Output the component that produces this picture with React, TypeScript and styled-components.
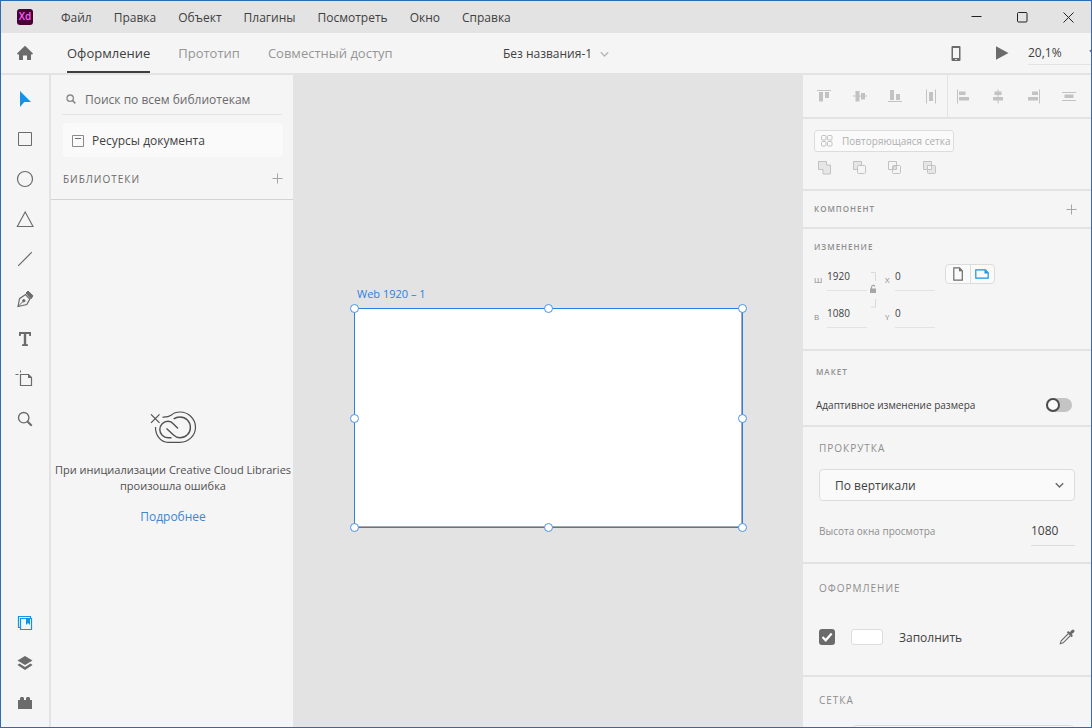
import React from "react";
import styled, { createGlobalStyle } from "styled-components";

const ink = "#3f3f3f";
const mid = "#6b6b6b";
const pale = "#c2c2c2";
const line = "#e3e3e3";
const surface = "#f5f5f5";
const accent = "#1592e6";

const GlobalStyle = createGlobalStyle`
  *, *::before, *::after { box-sizing: border-box; }
  body {
    margin: 0;
    font-family: "Open Sans", "Noto Sans", sans-serif;
    font-size: 12px;
    line-height: 16px;
    color: ${ink};
  }
  button, input, select { font: inherit; color: inherit; margin: 0; }
  button { border: 0; padding: 0; background: none; }
  svg { display: block; flex: none; }
`;

const Window = styled.div`
  display: flex;
  flex-direction: column;
  height: 100vh;
  overflow: hidden;
  border: 1px solid #2d6cb0;
  background: ${line};
`;

const TitleBar = styled.header`
  display: flex;
  align-items: center;
  height: 32px;
  flex: none;
  padding-left: 16px;
`;

const Menu = styled.nav`
  display: flex;
  flex: 1;
  gap: 22px;
  margin-left: 28px;
`;

const MenuItem = styled.button`
  height: 32px;
  padding-top: 2px;
  white-space: nowrap;
`;

const WindowButton = styled.button`
  display: grid;
  place-items: center;
  width: 46px;
  height: 32px;
`;

const Toolbar = styled.div`
  display: flex;
  align-items: stretch;
  height: 40px;
  flex: none;
  background: ${surface};
`;

const ToolbarStart = styled.div`
  display: flex;
  flex: 1;
`;

const ToolbarEnd = styled.div`
  display: flex;
  flex: 1;
  align-items: center;
  justify-content: flex-end;
`;

const HomeButton = styled.button`
  display: grid;
  place-items: center;
  width: 48px;
`;

const Tabs = styled.div`
  display: flex;
  gap: 28px;
  margin-left: 18px;
`;

const Tab = styled.button<{ $active?: boolean }>`
  font-size: 13px;
  white-space: nowrap;
  padding-top: 2px;
  color: ${(p) => (p.$active ? ink : "#969696")};
  border-bottom: 2px solid ${(p) => (p.$active ? ink : "transparent")};
`;

const DocumentName = styled.button`
  display: flex;
  align-items: center;
  gap: 8px;
  padding: 2px 0 0 20px;
  white-space: nowrap;
`;

const PreviewButton = styled.button`
  display: grid;
  place-items: center;
  width: 46px;
  height: 40px;
`;

const Zoom = styled.label`
  display: flex;
  align-items: center;
  width: 63px;
  height: 24px;
  overflow: hidden;
  margin-left: 3px;
  border-bottom: 1px solid ${line};
`;

const ZoomInput = styled.input`
  width: 61px;
  flex: none;
  border: 0;
  padding: 0;
  background: none;
  outline: none;
`;

const Workspace = styled.div`
  display: flex;
  flex: 1;
  min-height: 0;
  padding-top: 2px;
`;

const ToolRail = styled.nav`
  display: flex;
  flex-direction: column;
  justify-content: space-between;
  width: 50px;
  flex: none;
  padding: 4px 0;
  background: ${surface};
  border-right: 2px solid ${line};
`;

const ToolButton = styled.button`
  display: grid;
  place-items: center;
  width: 48px;
  height: 40px;
`;

const Libraries = styled.aside`
  display: flex;
  flex-direction: column;
  width: 242px;
  flex: none;
  background: ${surface};
`;

const Search = styled.label`
  display: flex;
  align-items: center;
  gap: 9px;
  height: 40px;
  flex: none;
  margin: 0 11px;
  padding: 9px 0 0 4px;
  border-bottom: 1px solid ${line};
`;

const SearchInput = styled.input`
  flex: 1;
  min-width: 0;
  height: 30px;
  border: 0;
  padding: 0;
  background: none;
  outline: none;
  &::placeholder { color: ${mid}; opacity: 1; }
`;

const AssetsButton = styled.button`
  display: flex;
  align-items: center;
  gap: 8px;
  height: 34px;
  flex: none;
  margin: 8px 10px 0 12px;
  padding: 2px 0 0 9px;
  border-radius: 4px;
  background: #fafafa;
`;

const LibrariesHeader = styled.div`
  display: flex;
  align-items: center;
  justify-content: space-between;
  height: 43px;
  flex: none;
  padding: 1px 10px 0 12px;
  border-bottom: 1px solid #d3d3d3;
`;

const Caption = styled.h2<{ $size?: number; $dark?: boolean; $strong?: boolean }>`
  margin: 0;
  font-size: ${(p) => p.$size ?? 10}px;
  font-weight: ${(p) => (p.$strong ? 600 : 400)};
  line-height: 16px;
  letter-spacing: 1px;
  text-transform: uppercase;
  color: ${(p) => (p.$dark ? mid : "#8e8e8e")};
`;

const ErrorState = styled.div`
  display: flex;
  flex: 1;
  flex-direction: column;
  align-items: center;
  justify-content: center;
  padding: 8px 0 0 2px;
  text-align: center;
  color: #505050;
`;

const ErrorText = styled.p`
  margin: 18px 0 15px;
  font-size: 11px;
  white-space: nowrap;
`;

const MoreLink = styled.a`
  color: #3a87d4;
  text-decoration: none;
`;

const Canvas = styled.main`
  display: flex;
  flex: 1;
  flex-direction: column;
  align-items: center;
  justify-content: center;
  padding-top: 11px;
  min-width: 0;
`;

const ArtboardFrame = styled.section`
  width: 388px;
`;

const ArtboardName = styled.div`
  height: 22px;
  padding-left: 3px;
  font-size: 11px;
  color: #2a80e4;
`;

const Artboard = styled.div`
  position: relative;
  height: 219px;
  background: #fff;
  border: solid #a8a8a8;
  border-width: 0 1px 1px 0;
`;

const Selection = styled.div`
  position: absolute;
  inset: 0 -1px -1px 0;
  &::before {
    content: "";
    position: absolute;
    inset: 0 -1px -1px 0;
    border: 1px solid #2a80e4;
  }
`;

const Handle = styled.i<{ $x: number; $y: number }>`
  position: absolute;
  left: calc(${(p) => p.$x}% - 4px);
  top: calc(${(p) => p.$y}% - 4px);
  width: 9px;
  height: 9px;
  border: 1px solid #4a93e8;
  border-radius: 50%;
  background: #fff;
`;

const Inspector = styled.aside`
  display: flex;
  flex-direction: column;
  width: 288px;
  flex: none;
  overflow: hidden;
  background: ${surface};
`;

const Section = styled.section<{ $height: number; $inset?: number; $top?: number }>`
  height: ${(p) => p.$height}px;
  flex: none;
  padding: ${(p) => p.$top ?? 0}px 16px 0 ${(p) => p.$inset ?? 16}px;
  border-bottom: 2px solid ${line};
`;

const AlignSection = styled(Section)`
  display: flex;
  padding: 0;
`;

const AlignGroup = styled.div<{ $first?: boolean }>`
  display: flex;
  align-items: center;
  justify-content: space-between;
  flex: 1;
  padding: ${(p) => (p.$first ? "0 8px 0 13px" : "0 14px 0 7px")};
  border-right: ${(p) => (p.$first ? `1px solid ${line}` : "0")};
`;

const IconButton = styled.button`
  display: grid;
  place-items: center;
  color: ${pale};
`;

const RepeatGrid = styled.button`
  display: flex;
  align-items: center;
  gap: 9px;
  width: 140px;
  height: 22px;
  padding-left: 6px;
  border: 1px solid #dcdcdc;
  border-radius: 3px;
  background: #fafafa;
  font-size: 10px;
  white-space: nowrap;
  color: #b0b0b0;
`;

const BooleanOps = styled.div`
  display: flex;
  gap: 20px;
  margin: 8px 0 0 3px;
`;

const TitleRow = styled.div`
  display: flex;
  align-items: center;
  justify-content: space-between;
  height: 36px;
  margin-right: -2px;
`;

const TransformGrid = styled.div`
  display: flex;
  margin-top: 9px;
`;

const FieldColumn = styled.div`
  display: flex;
  flex-direction: column;
  gap: 10px;
`;

const Field = styled.label<{ $label: number }>`
  display: grid;
  grid-template-columns: ${(p) => p.$label}px 40px;
  font-size: 8px;
  color: #8a8a8a;
`;

const FieldName = styled.span`
  padding-top: 8px;
`;

const FieldInput = styled.input`
  width: 100%;
  height: 27px;
  padding: 0 0 3px;
  border: 0;
  border-bottom: 1px solid ${line};
  background: none;
  outline: none;
  font-size: 10px;
  color: ${ink};
`;

const LockButton = styled.button`
  display: flex;
  justify-content: center;
  width: 18px;
  padding: 8px 6px 0 0;
  align-items: flex-start;
`;

const Orientation = styled.div`
  display: flex;
  width: 50px;
  height: 20px;
  margin-left: 10px;
  border: 1px solid #dcdcdc;
  border-radius: 4px;
  background: #fafafa;
`;

const OrientationButton = styled.button`
  display: grid;
  place-items: center;
  flex: 1;
  & + & { border-left: 1px solid #dcdcdc; }
`;

const SwitchRow = styled.label`
  display: flex;
  align-items: center;
  justify-content: space-between;
  margin-top: 17px;
  padding-right: 3px;
  font-size: 10px;
`;

const Switch = styled.input`
  appearance: none;
  position: relative;
  width: 26px;
  height: 14px;
  border-radius: 7px;
  background: #c4c4c4;
  &::before {
    content: "";
    position: absolute;
    inset: 0 12px 0 0;
    border: 2px solid #4b4b4b;
    border-radius: 50%;
    background: #fafafa;
  }
`;

const SelectBox = styled.div`
  display: grid;
  align-items: center;
  margin-top: 13px;
  & > * { grid-area: 1 / 1; }
  & > svg { justify-self: end; margin-right: 11px; pointer-events: none; }
`;

const Select = styled.select`
  appearance: none;
  width: 100%;
  height: 32px;
  padding: 2px 15px 0;
  border: 1px solid #dcdcdc;
  border-radius: 4px;
  background: #fafafa;
`;

const ViewportRow = styled.label`
  display: flex;
  align-items: center;
  justify-content: space-between;
  margin-top: 14px;
  font-size: 10px;
  color: #8e8e8e;
`;

const ViewportInput = styled.input`
  width: 44px;
  height: 31px;
  padding: 0;
  border: 0;
  border-bottom: 1px solid #dcdcdc;
  background: none;
  outline: none;
  font-size: 12px;
  color: ${ink};
`;

const FillRow = styled.div`
  display: flex;
  align-items: center;
  gap: 16px;
  height: 24px;
  margin-top: 29px;
`;

const CheckLabel = styled.label`
  display: grid;
  place-items: center;
  & > * { grid-area: 1 / 1; }
  & > svg { z-index: 1; pointer-events: none; }
`;

const Checkbox = styled.input`
  appearance: none;
  width: 16px;
  height: 16px;
  border-radius: 3px;
  background: ${mid};
`;

const Swatch = styled.button`
  width: 32px;
  height: 16px;
  border: 1px solid #dcdcdc;
  border-radius: 3px;
  background: #fff;
`;

const FillName = styled.span`
  flex: 1;
  padding-top: 2px;
`;

const GridBox = styled.select`
  display: block;
  appearance: none;
  width: 222px;
  height: 32px;
  margin: 17px 0 0 33px;
  border: 1px solid #dcdcdc;
  border-radius: 4px;
  background: #fafafa;
`;

type IconProps = { w: number; h: number; box?: string; children: React.ReactNode; fill?: string; stroke?: string };
const Icon = ({ w, h, box, children, fill = "none", stroke = "none" }: IconProps) => (
  <svg width={w} height={h} viewBox={box ?? `0 0 ${w} ${h}`} fill={fill} stroke={stroke} aria-hidden="true">
    {children}
  </svg>
);

const Plus = () => (
  <Icon w={11} h={11} stroke="#a6a6a6"><path d="M5.5 .5v10M.5 5.5h10" /></Icon>
);

const Chevron = ({ color, width = 1.5 }: { color: string; width?: number }) => (
  <Icon w={9} h={7} stroke={color}><path d="M.8 1.3 4.5 5 8.2 1.3" strokeWidth={width} /></Icon>
);

const menuItems = ["Файл", "Правка", "Объект", "Плагины", "Посмотреть", "Окно", "Справка"];
const tabs = ["Оформление", "Прототип", "Совместный доступ"];

const tools = [
  { name: "Выделение", icon: <Icon w={16} h={18} fill={accent}><path d="M3 1v16l4.300-5H14z" /></Icon> },
  { name: "Прямоугольник", icon: <Icon w={16} h={16} stroke={mid}><path d="M1.500 1.500h13v13h-13z" /></Icon> },
  { name: "Эллипс", icon: <Icon w={18} h={18} stroke={mid}><circle cx="9" cy="9" r="7.500" strokeWidth="1.200" /></Icon> },
  { name: "Многоугольник", icon: <Icon w={18} h={18} stroke={mid}><path d="M9.200 2 17 16.500H1.300z" strokeWidth="1.100" /></Icon> },
  { name: "Линия", icon: <Icon w={16} h={16} stroke={mid}><path d="m1.200 14.800 13.600-13.600" strokeWidth="1.200" /></Icon> },
  {
    name: "Перо",
    icon: (
      <Icon w={18} h={18} stroke={mid}>
        <path d="M2 16.500 3.500 8.700 9.500 4.600 13.800 9 10.800 14.500z" strokeWidth="1.200" />
        <path d="m2 16.500 5-5" />
        <circle cx="7.800" cy="10.800" r="1.200" fill={mid} />
        <path d="m10 3 2-2 5 4.800-2 3z" fill={mid} />
      </Icon>
    ),
  },
  {
    name: "Текст",
    icon: <Icon w={14} h={16} fill={mid}><path d="M1 1h12v4h-1.700L11 3H8.200v10l1.800.4V15H4v-1.600l1.800-.4V3H3L2.700 5H1z" /></Icon>,
  },
  {
    name: "Монтажная область",
    icon: (
      <Icon w={20} h={18} stroke={mid}>
        <path d="M5.500 4.500h8l3 3v8h-11z" strokeWidth="1.200" />
        <path d="M13 4v4h4z" fill={mid} stroke="none" />
        <path d="M.5 4.500h3M5.500 .5v2" />
      </Icon>
    ),
  },
  {
    name: "Масштаб",
    icon: <Icon w={16} h={16} stroke={mid}><circle cx="6.700" cy="6.700" r="5.200" strokeWidth="1.400" /><path d="m10.500 10.500 4.200 4.200" strokeWidth="2" /></Icon>,
  },
];

const panels = [
  {
    name: "Библиотеки",
    icon: (
      <Icon w={16} h={16} stroke={accent}>
        <path d="M3 12.500H1.500v-11h12V3" strokeWidth="1.200" />
        <path d="M3.500 3.500h11v11h-11z" strokeWidth="1.200" />
        <path d="M9 3.500h4V10l-2-2-2 2z" fill={accent} stroke="none" />
      </Icon>
    ),
  },
  {
    name: "Слои",
    icon: <Icon w={16} h={16} fill={mid}><path d="m8 1 7.500 4.500L8 10 .5 5.500z" /><path d="m2.400 8.600 5.600 3.300 5.600-3.300 1.900 1.400L8 15 .5 10z" /></Icon>,
  },
  {
    name: "Плагины",
    icon: <Icon w={16} h={14} fill={mid}><path d="M1 4h2V2l1-1h2l1 1v2h2V2l1-1h2l1 1v2h2v9H1z" /></Icon>,
  },
];

const columnAlign = [
  { name: "По верхнему краю", icon: <path d="M1 2.500h14" stroke="currentColor" />, bars: "M3 4h4v9.500H3zM9 4h4v6H9z" },
  { name: "По центру вертикально", icon: <path d="M1 8h14" stroke="currentColor" />, bars: "M3.500 3h4v10.500h-4zM9 5h4v6.500H9z" },
  { name: "По нижнему краю", icon: <path d="M1 13.500h14" stroke="currentColor" />, bars: "M3 2h4v10H3zM9 6h4v6H9z" },
  { name: "Распределить по горизонтали", icon: <path d="M3.500 1.500v14M12.500 1.500v14" stroke="currentColor" />, bars: "M6 4h4v9H6z" },
];
const rowAlign = [
  { name: "По левому краю", icon: <path d="M2.500 1.500v14" stroke="currentColor" />, bars: "M4 3.500h6.500V7H4zM4 9h10v3.500H4z" },
  { name: "По центру горизонтально", icon: <path d="M8 1.500v14" stroke="currentColor" />, bars: "M4.500 3.500h7V7h-7zM3 9h10v3.500H3z" },
  { name: "По правому краю", icon: <path d="M13.500 1.500v14" stroke="currentColor" />, bars: "M6 3.500h6V7H6zM2 9h10v3.500H2z" },
  { name: "Распределить по вертикали", icon: <path d="M1 4.500h14M1 12.500h14" stroke="currentColor" />, bars: "M3.500 6.500h9v3.500h-9z" },
];

const booleans = [
  { name: "Добавить", icon: <path d="M1.500 1.500h8v3.500h4v9H6V9.500H1.500z" fill="#e6e6e6" /> },
  { name: "Вычесть", icon: <><path d="M1.500 1.500h8v8h-8z" fill="#e6e6e6" /><rect x="5.500" y="5.500" width="8" height="8" rx="1" fill={surface} /></> },
  { name: "Пересечение", icon: <><path d="M1.500 1.500h8v8h-8z" /><rect x="5.500" y="5.500" width="8" height="8" rx="1" /><path d="M6 6h3.500v3.500H6z" fill="#dedede" /></> },
  { name: "Исключить", icon: <><path d="M1.500 1.500h8v8h-8z" fill="#e6e6e6" /><rect x="5.500" y="5.500" width="8" height="8" rx="1" fill="#e6e6e6" /><path d="M5.500 5.500h4v4h-4z" fill={surface} /></> },
];

const handles = [[0, 0], [50, 0], [100, 0], [0, 50], [100, 50], [0, 100], [50, 100], [100, 100]];

const AlignButton = ({ name, icon, bars }: { name: string; icon: React.ReactNode; bars: string }) => (
  <IconButton aria-label={name}>
    <Icon w={16} h={17}>{icon}<path d={bars} fill="currentColor" /></Icon>
  </IconButton>
);

const NumberField = ({ name, value, label }: { name: string; value: string; label: number }) => (
  <Field $label={label}>
    <FieldName>{name}</FieldName>
    <FieldInput defaultValue={value} />
  </Field>
);

export default function App() {
  return (
    <>
      <GlobalStyle />
      <Window>
        <TitleBar>
          <svg width="16" height="16" viewBox="0 0 16 16" role="img" aria-label="Xd">
            <rect width="16" height="16" rx="3" fill="#470137" />
            <text x="8" y="11" textAnchor="middle" fontSize="10" fontWeight="600" fill="#ff61f6">Xd</text>
          </svg>
          <Menu>
            {menuItems.map((item) => <MenuItem key={item}>{item}</MenuItem>)}
          </Menu>
          <WindowButton aria-label="Свернуть">
            <Icon w={11} h={11} stroke="#222"><path d="M.5 4.500h10" /></Icon>
          </WindowButton>
          <WindowButton aria-label="Развернуть">
            <Icon w={11} h={11} stroke="#222"><rect x=".5" y=".5" width="9.500" height="9.500" rx="1" /></Icon>
          </WindowButton>
          <WindowButton aria-label="Закрыть">
            <Icon w={11} h={11} stroke="#222"><path d="m.5.5 10 10M10.500.5l-10 10" /></Icon>
          </WindowButton>
        </TitleBar>

        <Toolbar>
          <ToolbarStart>
            <HomeButton aria-label="Главная">
              <Icon w={16} h={16} fill={mid}><path d="M8 .8 16 8.600 15.200 9.400H14V15h-4v-4.500H6V15H2V9.400H.8L0 8.600z" /></Icon>
            </HomeButton>
            <Tabs role="tablist">
              {tabs.map((tab, i) => (
                <Tab key={tab} role="tab" aria-selected={i === 0} $active={i === 0}>{tab}</Tab>
              ))}
            </Tabs>
          </ToolbarStart>
          <DocumentName>Без названия-1 <Chevron color="#b5b5b5" width={1.300} /></DocumentName>
          <ToolbarEnd>
            <PreviewButton aria-label="Просмотр на устройстве">
              <Icon w={10} h={16}>
                <path d="M1.500 1h7a1 1 0 0 1 1 1v13a1 1 0 0 1-1 1h-7a1 1 0 0 1-1-1V2a1 1 0 0 1 1-1zM2 3v10h6V3zM4.200 14v1h1.600v-1z" fill={mid} fillRule="evenodd" />
              </Icon>
            </PreviewButton>
            <PreviewButton aria-label="Просмотр">
              <Icon w={14} h={14} fill={mid}><path d="M1 .3 13.500 7 1 13.700z" /></Icon>
            </PreviewButton>
            <Zoom>
              <ZoomInput aria-label="Масштаб" defaultValue="20,1%" />
              <Chevron color={mid} />
            </Zoom>
          </ToolbarEnd>
        </Toolbar>

        <Workspace>
          <ToolRail aria-label="Инструменты">
            <div>
              {tools.map((t) => <ToolButton key={t.name} aria-label={t.name}>{t.icon}</ToolButton>)}
            </div>
            <div>
              {panels.map((t) => <ToolButton key={t.name} aria-label={t.name}>{t.icon}</ToolButton>)}
            </div>
          </ToolRail>

          <Libraries>
            <Search>
              <Icon w={10} h={10} stroke="#8a8a8a"><circle cx="4.200" cy="4.200" r="3.200" strokeWidth="1.300" /><path d="m6.500 6.500 2.800 2.800" strokeWidth="1.700" /></Icon>
              <SearchInput placeholder="Поиск по всем библиотекам" aria-label="Поиск по всем библиотекам" />
            </Search>
            <AssetsButton>
              <Icon w={12} h={12} stroke={mid}><path d="M.5.500h11v11H.5z" stroke="#8a8a8a" /><path d="M3 3.500h6" /></Icon>
              Ресурсы документа
            </AssetsButton>
            <LibrariesHeader>
              <Caption $dark>Библиотеки</Caption>
              <IconButton aria-label="Добавить библиотеку"><Plus /></IconButton>
            </LibrariesHeader>
            <ErrorState>
              <Icon w={47} h={34} box="100 20 47 34" stroke="#505050">
                <path d="m101 24.300 8.500 8.500M109.500 24.300 101 32.800" strokeWidth="1.200" />
                <path d="M112.500 27.300C116 27 118.500 27 121 25.200 124 22.600 127 22 130 22c8.500 0 15.500 6.800 15.500 15.200S138.500 52.300 130 52.300h-12C110.500 52.300 105.300 45 105.500 37" strokeWidth="1.200" />
                <path d="M128 38.500 123.500 34c-1.600-1.800-3.500-2.700-5.500-2.700a8.200 8.200 0 0 0 0 16.400h3.500" strokeWidth="1.400" />
                <path d="m116.500 38.500 7 6.600c2 1.900 4 2.700 6.500 2.700A10.400 10.400 0 0 0 130 27c-2.500 0-4.500.6-6.300 1.900" strokeWidth="1.400" />
              </Icon>
              <ErrorText>
                При инициализации Creative Cloud Libraries
                <br />
                произошла ошибка
              </ErrorText>
              <MoreLink href="#more">Подробнее</MoreLink>
            </ErrorState>
          </Libraries>

          <Canvas>
            <ArtboardFrame>
              <ArtboardName>Web 1920 – 1</ArtboardName>
              <Artboard>
                <Selection>
                  {handles.map(([x, y]) => <Handle key={`${x}-${y}`} $x={x} $y={y} />)}
                </Selection>
              </Artboard>
            </ArtboardFrame>
          </Canvas>

          <Inspector>
            <AlignSection $height={44}>
              <AlignGroup $first>{columnAlign.map((a) => <AlignButton key={a.name} {...a} />)}</AlignGroup>
              <AlignGroup>{rowAlign.map((a) => <AlignButton key={a.name} {...a} />)}</AlignGroup>
            </AlignSection>

            <Section $height={72} $inset={11} $top={11}>
              <RepeatGrid>
                <Icon w={12} h={12} stroke={pale}>
                  {[[0.5, 0.5], [6.5, 0.5], [0.5, 6.5], [6.5, 6.5]].map(([x, y]) => (
                    <rect key={`${x}-${y}`} x={x} y={y} width="4.500" height="4.500" rx="1" />
                  ))}
                </Icon>
                Повторяющаяся сетка
              </RepeatGrid>
              <BooleanOps>
                {booleans.map((b) => (
                  <IconButton key={b.name} aria-label={b.name}>
                    <Icon w={15} h={15} stroke="currentColor">{b.icon}</Icon>
                  </IconButton>
                ))}
              </BooleanOps>
            </Section>

            <Section $height={38} $inset={11}>
              <TitleRow>
                <Caption $size={8} $strong>Компонент</Caption>
                <IconButton aria-label="Добавить компонент"><Plus /></IconButton>
              </TitleRow>
            </Section>

            <Section $height={122} $inset={11} $top={10}>
              <Caption $size={8} $strong>Изменение</Caption>
              <TransformGrid>
                <FieldColumn>
                  <NumberField name="Ш" value="1920" label={13} />
                  <NumberField name="В" value="1080" label={13} />
                </FieldColumn>
                <LockButton aria-label="Сохранять пропорции">
                  <Icon w={8} h={36}>
                    <path d="M2 .5h4.500V9M6.500 27v8H2" stroke="#dadada" />
                    <path d="M2.500 17v-2a1.800 1.800 0 0 1 3.400-.6" stroke="#a6a6a6" strokeWidth="1.200" />
                    <path d="M1 16.500h6V21H1z" fill="#a6a6a6" />
                  </Icon>
                </LockButton>
                <FieldColumn>
                  <NumberField name="X" value="0" label={10} />
                  <NumberField name="Y" value="0" label={10} />
                </FieldColumn>
                <Orientation>
                  <OrientationButton aria-label="Книжная">
                    <Icon w={10} h={14} stroke={mid}><path d="M.8.8H6.500l2.800 2.900v9.500H.8z" strokeWidth="1.200" /><path d="M6 .8v3.500h3.500z" fill={mid} stroke="none" /></Icon>
                  </OrientationButton>
                  <OrientationButton aria-label="Альбомная">
                    <Icon w={14} h={10} stroke={accent}><path d="M.8.8h9.700l2.700 2.900v5.500H.8z" strokeWidth="1.200" /><path d="M9.500.8v3.800h4z" fill={accent} stroke="none" /></Icon>
                  </OrientationButton>
                </Orientation>
              </TransformGrid>
            </Section>

            <Section $height={76} $inset={13} $top={13}>
              <Caption $size={8} $strong>Макет</Caption>
              <SwitchRow>
                Адаптивное изменение размера
                <Switch type="checkbox" role="switch" />
              </SwitchRow>
            </Section>

            <Section $height={137} $top={13}>
              <Caption>Прокрутка</Caption>
              <SelectBox>
                <Select aria-label="Прокрутка"><option>По вертикали</option></Select>
                <Chevron color={mid} />
              </SelectBox>
              <ViewportRow>
                Высота окна просмотра
                <ViewportInput defaultValue="1080" />
              </ViewportRow>
            </Section>

            <Section $height={113} $top={16}>
              <Caption>Оформление</Caption>
              <FillRow>
                <CheckLabel>
                  <Checkbox type="checkbox" defaultChecked aria-label="Заполнить" />
                  <Icon w={16} h={16} stroke="#fff"><path d="m3.500 8 3.200 3.300L12.700 4.600" strokeWidth="2.200" /></Icon>
                </CheckLabel>
                <Swatch aria-label="Цвет заливки" />
                <FillName>Заполнить</FillName>
                <IconButton aria-label="Пипетка">
                  <Icon w={16} h={16} stroke={mid}>
                    <path d="M9.500 4.500 2.200 11.800 1.300 14.700l2.900-.9L11.500 6.500" strokeWidth="1.100" />
                    <path d="m7.800 3.300 1.400-1.200 1.600 1.200L12.800 1a1.500 1.500 0 0 1 2.200 2.200l-2.300 2 1.200 1.600-1.200 1.400z" fill={mid} stroke="none" />
                  </Icon>
                </IconButton>
              </FillRow>
            </Section>

            <Section $height={90} $top={15}>
              <Caption>Сетка</Caption>
              <GridBox aria-label="Сетка"><option>Макет</option></GridBox>
            </Section>
          </Inspector>
        </Workspace>
      </Window>
    </>
  );
}
